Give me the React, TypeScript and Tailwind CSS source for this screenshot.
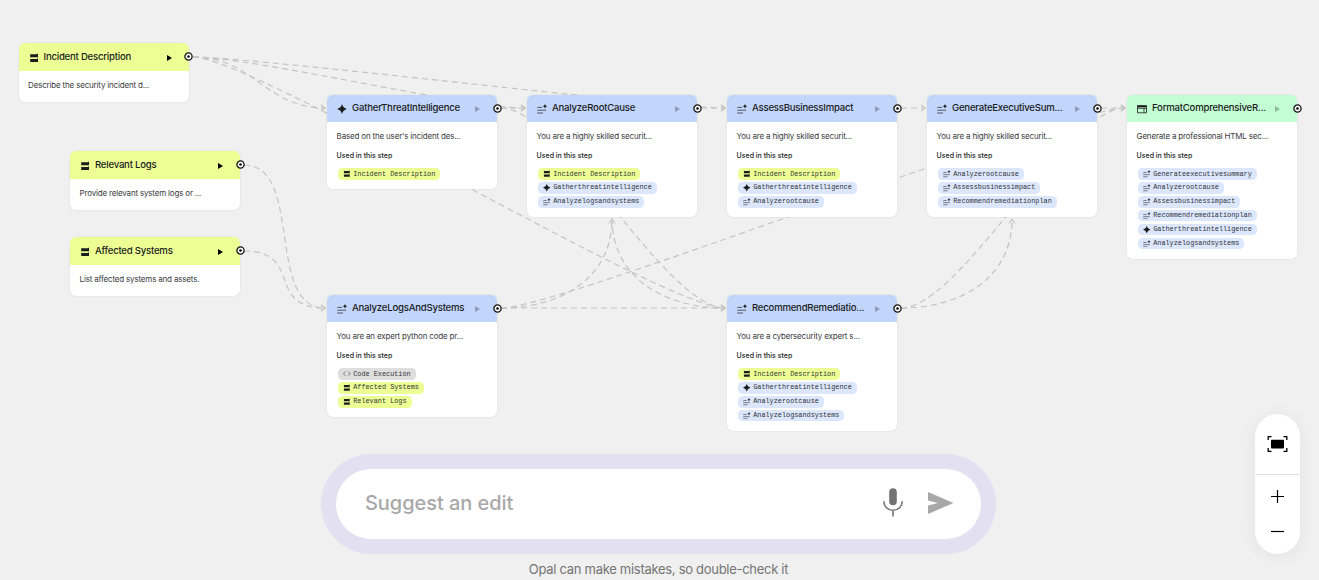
import React from "react";

type IconName = "input" | "spark" | "text" | "web" | "code";
type Tone = "lime" | "blue" | "green" | "gray";
type Chip = { icon: IconName; label: string };
type NodeData = {
  x: number;
  y: number;
  tone: Tone;
  icon: IconName;
  title: string;
  body: string;
  chips?: Chip[];
};

const headerTone: Record<Tone, string> = {
  lime: "bg-[#edff94]",
  blue: "bg-[#c2d5fb]",
  green: "bg-[#c3fdd4]",
  gray: "bg-[#dedede]",
};

const incident: Chip = { icon: "input", label: "Incident Description" };
const gather: Chip = { icon: "spark", label: "Gatherthreatintelligence" };
const logs: Chip = { icon: "text", label: "Analyzelogsandsystems" };
const root: Chip = { icon: "text", label: "Analyzerootcause" };
const impact: Chip = { icon: "text", label: "Assessbusinessimpact" };
const remedy: Chip = { icon: "text", label: "Recommendremediationplan" };

const nodes: NodeData[] = [
  { x: 18.5, y: 43, tone: "lime", icon: "input", title: "Incident Description", body: "Describe the security incident d..." },
  { x: 70, y: 151.3, tone: "lime", icon: "input", title: "Relevant Logs", body: "Provide relevant system logs or ..." },
  { x: 70, y: 237.3, tone: "lime", icon: "input", title: "Affected Systems", body: "List affected systems and assets." },
  { x: 327, y: 94.5, tone: "blue", icon: "spark", title: "GatherThreatIntelligence", body: "Based on the user's incident des...", chips: [incident] },
  { x: 527, y: 94.5, tone: "blue", icon: "text", title: "AnalyzeRootCause", body: "You are a highly skilled securit...", chips: [incident, gather, logs] },
  { x: 727, y: 94.5, tone: "blue", icon: "text", title: "AssessBusinessImpact", body: "You are a highly skilled securit...", chips: [incident, gather, root] },
  { x: 927, y: 94.5, tone: "blue", icon: "text", title: "GenerateExecutiveSum...", body: "You are a highly skilled securit...", chips: [root, impact, remedy] },
  {
    x: 1127, y: 94.5, tone: "green", icon: "web", title: "FormatComprehensiveR...", body: "Generate a professional HTML sec...",
    chips: [{ icon: "text", label: "Generateexecutivesummary" }, root, impact, remedy, gather, logs],
  },
  {
    x: 327, y: 294.5, tone: "blue", icon: "text", title: "AnalyzeLogsAndSystems", body: "You are an expert python code pr...",
    chips: [{ icon: "code", label: "Code Execution" }, { icon: "input", label: "Affected Systems" }, { icon: "input", label: "Relevant Logs" }],
  },
  { x: 727, y: 294.5, tone: "blue", icon: "text", title: "RecommendRemediatio...", body: "You are a cybersecurity expert s...", chips: [incident, gather, root, logs] },
];

const sideEdges: [number, number, number, number][] = [
  [193, 57, 325, 108],
  [193, 57, 525, 108],
  [193, 57, 725, 108],
  [193, 57, 725, 308],
  [244, 165, 325, 308],
  [244, 251, 325, 308],
  [501, 108, 525, 108],
  [501, 108, 725, 308],
  [501, 308, 725, 308],
  [501, 308, 1125, 108],
  [701, 108, 725, 108],
  [901, 108, 925, 108],
  [901, 308, 1125, 108],
  [1101, 108, 1125, 108],
];

const bentEdges = [
  "M501 308C561 308 612 278 612 219",
  "M901 308C961 308 1012 278 1012 219",
  "M612 218C612 278 665 308 725 308",
];

function sidePath([x1, y1, x2, y2]: [number, number, number, number]) {
  if (y1 === y2) return `M${x1} ${y1}H${x2}`;
  return `M${x1} ${y1}C${x1 + 60} ${y1} ${x2 - 60} ${y2} ${x2} ${y2}`;
}

function Edges() {
  return (
    <svg className="absolute inset-0" width="1319" height="580" fill="none" stroke="#c4c4c4" strokeWidth="1.2">
      {sideEdges.map((e, i) => (
        <g key={i}>
          <path d={sidePath(e)} strokeDasharray="6 4" />
          <path d={`M${e[2] - 4} ${e[3] - 3}l4 3l-4 3`} />
        </g>
      ))}
      {bentEdges.map((d) => (
        <path key={d} d={d} strokeDasharray="6 4" />
      ))}
      <path d="M609 223.5l3 -4l3 4M1009 223.5l3 -4l3 4" />
    </svg>
  );
}

function NodeIcon({ name, className }: { name: IconName; className: string }) {
  return (
    <svg viewBox="0 0 10 10" className={className} fill="none" stroke="#1b1c1d">
      {name === "input" && (
        <path d="M1.2 1.2H7.6L9 .6V4.2H1.2ZM1.2 5.9H7.6L9 5.3V9H1.2Z" fill="#1b1c1d" stroke="none" />
      )}
      {name === "spark" && <path d="M5 0Q5.9 4.1 10 5Q5.9 5.9 5 10Q4.1 5.9 0 5Q4.1 4.1 5 0Z" fill="#1b1c1d" stroke="none" />}
      {name === "text" && (
        <>
          <path d="M.3 3.4H5M.3 6.2H9M.3 9H6" strokeWidth=".9" stroke="#44474f" />
          <path d="M8 .1L8.7 1.6L10 2.3L8.7 3L8 4.5L7.3 3L5.8 2.3L7.3 1.6Z" fill="#1b1c1d" stroke="none" />
        </>
      )}
      {name === "web" && (
        <>
          <path d="M.5 1.6H9.5V8.8H.5ZM.5 4.3H9.5M7 4.3V8.8" strokeWidth=".8" />
          <path d="M.5 1.6H9.5V3.3H.5Z" fill="#1b1c1d" stroke="none" />
        </>
      )}
      {name === "code" && <path d="M3.2 2.3L.6 5L3.2 7.7M6.8 2.3L9.4 5L6.8 7.7" strokeWidth=".9" stroke="#444" />}
    </svg>
  );
}

function ChipRow({ chip }: { chip: Chip }) {
  const tone = chip.icon === "input" ? "bg-[#edff94]" : chip.icon === "code" ? "bg-[#dedede]" : "bg-[#dce7fd]";
  return (
    <div className={`flex h-[11.5px] items-center rounded-[4.5px] pr-[5px] pl-[5.5px] ${tone}`}>
      <NodeIcon name={chip.icon} className="mr-[2.6px] size-[7.5px] shrink-0" />
      <span className="font-['Liberation_Mono',monospace] text-[6.85px] leading-[11px] whitespace-nowrap text-[#303236]">{chip.label}</span>
    </div>
  );
}

function NodeCard({ node }: { node: NodeData }) {
  const muted = node.tone !== "lime";
  return (
    <section
      className="absolute w-[170.4px] rounded-[6px] bg-white shadow-[0_0_1.5px_rgba(0,0,0,0.16)]"
      style={{ left: node.x, top: node.y }}
    >
      <header className={`flex h-[27.5px] items-center rounded-t-[6px] pl-[10px] ${headerTone[node.tone]}`}>
        <NodeIcon name={node.icon} className="mt-[1.5px] size-[10px] shrink-0" />
        <h2 className="ml-[5px] w-[123px] text-[9.6px] leading-[14px] font-[450] tracking-[-0.23px] whitespace-nowrap text-[#1b1c1d]">{node.title}</h2>
        <svg viewBox="0 0 5 6" className="mt-[1.5px] h-[6px] w-[5px] shrink-0" fill={muted ? "#1b1c1d" : "#000"} opacity={muted ? 0.3 : 1}>
          <path d="M0 0L5 3L0 6Z" />
        </svg>
        <span className="mt-[-0.5px] mr-[-4.5px] ml-auto flex size-[9px] shrink-0 items-center justify-center">
          <svg width="9" height="9" viewBox="0 0 9 9">
            <circle cx="4.5" cy="4.5" r="3.6" fill="#fff" stroke="#111" strokeWidth="1.3" />
            <circle cx="4.5" cy="4.5" r="1.3" fill="#000" />
          </svg>
        </span>
      </header>
      <div className={muted ? "px-[9.6px] pt-[9px] pb-[9.4px]" : "px-[9.6px] pt-[9px] pb-[11px]"}>
        <p className="text-[8px] leading-[11px] tracking-[-0.18px] whitespace-nowrap text-[#3a3b3d]">{node.body}</p>
        {node.chips && (
          <>
            <h3 className="mt-[9px] text-[7px] leading-[10px] font-medium whitespace-nowrap text-[#1b1c1d]">Used in this step</h3>
            <div className="mt-[7.4px] ml-[1px] flex flex-col items-start gap-[2.35px]">
              {node.chips.map((c) => (
                <ChipRow key={c.label} chip={c} />
              ))}
            </div>
          </>
        )}
      </div>
    </section>
  );
}

function ZoomControls() {
  return (
    <div className="absolute top-[414px] left-[1255px] flex h-[140px] w-[45px] flex-col items-center rounded-full bg-white shadow-[0_2px_16px_rgba(0,0,0,0.06)]">
      <button className="flex h-[61px] w-[43px] items-center justify-center border-b border-[#dedede]">
        <svg width="21" height="16" viewBox="0 0 21 16" fill="none" stroke="#000" strokeWidth="1.3">
          <path d="M1.2 4V.7H4.5M16.5 .7H19.8V4M19.8 12V15.3H16.5M4.5 15.3H1.2V12" />
          <rect x="4" y="3.7" width="13" height="8.8" rx="1" fill="#000" stroke="none" />
        </svg>
      </button>
      <button className="flex h-[43px] items-center justify-center">
        <svg width="15" height="15" stroke="#000" strokeWidth="1.2"><path d="M1 7.5H14M7.5 1V14" /></svg>
      </button>
      <button className="flex h-[26px] items-center justify-center">
        <svg width="15" height="15" stroke="#000" strokeWidth="1.2"><path d="M1 7.5H14" /></svg>
      </button>
    </div>
  );
}

function Prompt() {
  return (
    <div className="absolute top-[454px] left-[321px] flex w-[675px] flex-col items-center">
      <div className="w-full rounded-[50px] bg-[#e2e0f1] p-[15px]">
        <div className="flex h-[70px] items-center rounded-[35px] bg-white pb-[2px] pl-[29px]">
          <span className="w-[518px] text-[20px] leading-[28px] font-medium tracking-[-0.05px] text-[#a8a8a8]">Suggest an edit</span>
          <svg className="mt-[-1px]" width="20" height="29" viewBox="0 0 20 29" fill="none" stroke="#737373" strokeWidth="1.6">
            <rect x="6.2" y="0.2" width="7.6" height="17" rx="3.8" fill="#737373" stroke="none" />
            <path d="M.8 13.2C.8 18.5 4.8 22.3 10 22.3S19.2 18.5 19.2 13.2M10 22.3V28.5" />
          </svg>
          <svg className="ml-[25px]" width="26" height="22" viewBox="0 0 26 22" fill="#a8a8a8">
            <path d="M0 0L25.5 11L0 22V13.4L10 11L0 8.6Z" />
          </svg>
        </div>
      </div>
      <p className="mt-[5px] text-[13px] leading-[20px] tracking-[-0.29px] whitespace-nowrap text-[#747474]">Opal can make mistakes, so double-check it</p>
    </div>
  );
}

export default function App() {
  return (
    <main className="relative h-[580px] w-[1319px] overflow-hidden bg-[#f0f0f0] font-[Inter,sans-serif]">
      <Edges />
      {nodes.map((n) => (
        <NodeCard key={n.title} node={n} />
      ))}
      <Prompt />
      <ZoomControls />
    </main>
  );
}
